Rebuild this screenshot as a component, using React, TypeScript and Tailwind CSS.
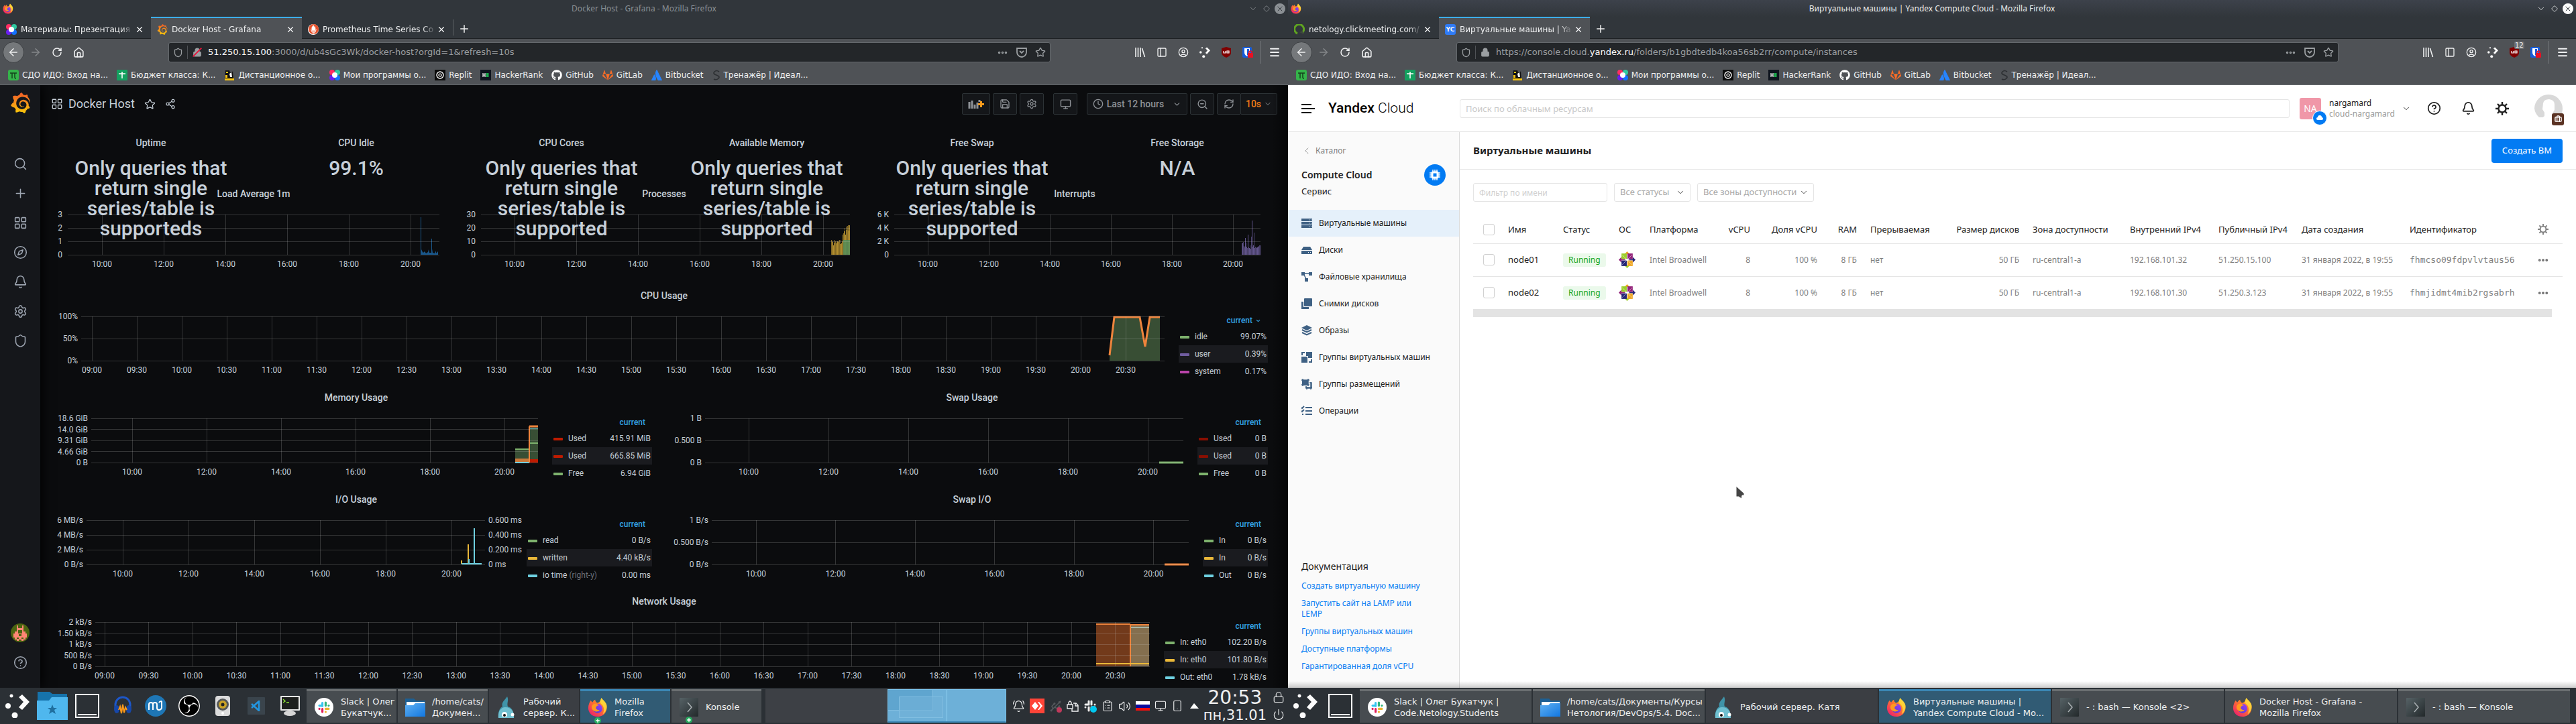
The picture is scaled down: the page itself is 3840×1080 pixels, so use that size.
import React from "react";
import {
  ArrowLeft, ArrowRight, Bell, BellRing, Briefcase, ChevronDown, ChevronLeft, CircleHelp,
  Clock, Compass, Diamond, Ellipsis, House, LayoutGrid, Lock, Menu, Monitor, PanelLeft, Plus, Power, RefreshCw,
  RotateCw, Save, Search, Settings, Share2, Shield, Smartphone, Star, Usb, UserCircle, Volume2, X, ZoomOut, ClipboardList,
} from "lucide-react";
import { FaAtlassian, FaGithub, FaGitlab } from "react-icons/fa";
import { SiGrafana, SiObsstudio, SiPrometheus } from "react-icons/si";

const UI = "font-['DejaVu_Sans',sans-serif]";

/* ---------- logos ---------- */

function FirefoxLogo({ size }: { size: number }) {
  return (
    <svg width={size} height={size} viewBox="0 0 32 32" aria-hidden="true">
      <path d="M22 1c1 3 6 5 8 11 2 8-2 19-14 19C6 31 1 24 1 17 1 12 3 8 5 5c1 2 2 3 3 3 1-2 2-3 4-4 0 2 1 4 3 5 3 0 6-3 7-8z" fill="url(#fx-body)" />
      <circle cx="16" cy="18" r="7.5" fill="url(#fx-globe)" />
      <path d="M8 12c4-3 8-1 10 1-3 0-5 2-5 4s3 4 6 3c-2 4-9 4-12-1-1-3-1-5 1-7z" fill="#ff9a1f" />
      <path d="M22 1c1 3 6 5 8 11 1 6-1 12-6 15 4-8 1-14-3-17-2-2-1-6 1-9z" fill="#ffd93b" opacity=".85" />
    </svg>
  );
}

function SlackLogo({ size }: { size: number }) {
  return (
    <svg width={size} height={size} viewBox="0 0 30 30" aria-hidden="true">
      <circle cx="15" cy="15" r="15" fill="#fff" />
      <g strokeWidth="3.4" strokeLinecap="round">
        <path d="M12.4 8v5" stroke="#36c5f0" />
        <path d="M7.6 12.4h4" stroke="#36c5f0" />
        <path d="M17.6 7.6v4.8" stroke="#2eb67d" />
        <path d="M22.4 12.4h0" stroke="#2eb67d" />
        <path d="M17.6 17.6h4.8" stroke="#ecb22e" />
        <path d="M17.6 22.4h0" stroke="#ecb22e" />
        <path d="M12.4 17.8v4.6" stroke="#e01e5a" />
        <path d="M7.6 17.6h0" stroke="#e01e5a" />
      </g>
    </svg>
  );
}

function NetologyLogo({ size }: { size: number }) {
  return (
    <svg width={size} height={size} viewBox="0 0 16 16" aria-hidden="true">
      <circle cx="4" cy="4" r="4" fill="#ff2e63" />
      <circle cx="12" cy="4" r="4" fill="#2fc9a0" />
      <circle cx="4" cy="12" r="4" fill="#6a1ff0" />
      <circle cx="12" cy="12" r="4" fill="#1471ff" />
      <circle cx="8" cy="8" r="4" fill="#fff" />
    </svg>
  );
}

function FolderLogo({ size }: { size: number }) {
  return (
    <svg width={size} height={size} viewBox="0 0 30 30" aria-hidden="true">
      <path d="M0 2h13l3 3h14v10H0z" fill="#1d5f93" />
      <path d="M2 7h27v8H2z" fill="#fff" />
      <path d="M0 12h12l3-3h15v20H0z" fill="url(#folder)" />
    </svg>
  );
}

function KonsoleLogo() {
  return (
    <svg width="28" height="28" viewBox="0 0 28 28" aria-hidden="true">
      <rect width="28" height="28" rx="1" fill="url(#konsole)" />
      <path d="M12 7l6 7-6 7" fill="none" stroke="#aab0b3" strokeWidth="1.5" />
    </svg>
  );
}

function WhaleLogo() {
  return (
    <svg width="26" height="32" viewBox="0 0 26 32" aria-hidden="true">
      <path d="M14 0c3 6-1 10 1 15 5 1 9 6 9 17H1c-1-9 2-15 6-17C5 9 10 6 14 0z" fill="#3f93a8" />
      <path d="M1 32c-1-9 3-15 9-16 8-1 15 5 14 16z" fill="#6fbfd0" />
      <circle cx="10" cy="27" r="4" fill="#fff" />
      <circle cx="10" cy="28" r="2" fill="#111" />
      <circle cx="22" cy="27" r="2.5" fill="#fff" />
    </svg>
  );
}

function PlasmaLogo({ size }: { size: number }) {
  return (
    <svg width={size} height={size} viewBox="0 0 36 36" fill="#fcfcfc" aria-hidden="true">
      <circle cx="9" cy="3" r="2.5" />
      <circle cx="4" cy="18" r="4" />
      <circle cx="14" cy="32" r="4.5" />
      <path d="M20 5l5-4 11 11-11 12-5-4 7-8z" />
    </svg>
  );
}

function Gradients() {
  return (
    <svg width="0" height="0" className="absolute" aria-hidden="true">
      <defs>
        <linearGradient id="fx-body" x1="1" y1="0" x2="0.2" y2="1">
          <stop offset="0" stopColor="#ffe030" /><stop offset=".45" stopColor="#ff7a2a" /><stop offset="1" stopColor="#ec1e6e" />
        </linearGradient>
        <linearGradient id="fx-globe" x1="1" y1="0" x2="0" y2="1">
          <stop offset="0" stopColor="#a33df5" /><stop offset="1" stopColor="#4a3fd0" />
        </linearGradient>
        <linearGradient id="folder" x1="0" y1="0" x2="1" y2="1">
          <stop offset="0" stopColor="#5fb0f2" /><stop offset="1" stopColor="#1277e0" />
        </linearGradient>
        <linearGradient id="konsole" x1="0" y1="0" x2="1" y2="1">
          <stop offset="0" stopColor="#566266" /><stop offset="1" stopColor="#23292b" />
        </linearGradient>
        <linearGradient id="grafana" x1="0" y1="0" x2="0" y2="1">
          <stop offset="0" stopColor="#f05a28" /><stop offset="1" stopColor="#fbca0a" />
        </linearGradient>
      </defs>
    </svg>
  );
}

/* ---------- browser chrome ---------- */

type TabInfo = { title: string; icon: React.ReactNode; active?: boolean };

const bookmarks: { label: string; icon: React.ReactNode }[] = [
  {
    label: "СДО ИДО: Вход на...",
    icon: <svg width="16" height="16" viewBox="0 0 16 16"><rect width="16" height="16" rx="3" fill="#35b44a" /><path d="M3 5h10M6 5v8M10 5v6q0 2 2 2" stroke="#14401c" strokeWidth="1.5" fill="none" /></svg>,
  },
  {
    label: "Бюджет класса: К...",
    icon: <svg width="16" height="16" viewBox="0 0 16 16"><rect width="16" height="16" rx="1" fill="#13a05f" /><path d="M3 6h10M8 3v10" stroke="#fff" strokeWidth="1.6" /></svg>,
  },
  {
    label: "Дистанционное о...",
    icon: <svg width="16" height="16" viewBox="0 0 16 16"><path d="M2 1h6l1 3h3l1-2 1 14H1z" fill="#111" /><path d="M3 3h3v2H3zM2 8h3v4H2zM1 13h14v3H1z" fill="#f5c211" /><path d="M8 6l3-2 1 7H9z" fill="#fff" /></svg>,
  },
  { label: "Мои программы о...", icon: <NetologyLogo size={16} /> },
  {
    label: "Replit",
    icon: <svg width="16" height="16" viewBox="0 0 16 16"><rect width="16" height="16" fill="#0b0b0b" /><circle cx="8" cy="8" r="5" fill="none" stroke="#fff" strokeWidth="1.4" /><circle cx="8" cy="8" r="2" fill="none" stroke="#fff" strokeWidth="1.2" /></svg>,
  },
  {
    label: "HackerRank",
    icon: <svg width="16" height="16" viewBox="0 0 16 16"><rect width="16" height="16" fill="#0e141e" /><path d="M4 5v6M7 5v6M4 8h3" stroke="#fff" strokeWidth="1.2" /><rect x="8.500" y="5" width="4" height="6" fill="#1ba94c" /></svg>,
  },
  { label: "GitHub", icon: <FaGithub size={16} className="text-white" /> },
  { label: "GitLab", icon: <FaGitlab size={16} className="text-[#fc6d26]" /> },
  { label: "Bitbucket", icon: <FaAtlassian size={16} className="text-[#2684ff]" /> },
  {
    label: "Тренажёр | Идеал...",
    icon: <svg width="12" height="16" viewBox="0 0 12 16"><path d="M10 3Q6 0 3 3t3 5 3 5-7 1" fill="none" stroke="#2c2f32" strokeWidth="1.6" /></svg>,
  },
];

function IconButton({ label, children, className = "" }: { label: string; children: React.ReactNode; className?: string }) {
  return (
    <button type="button" aria-label={label} className={`flex shrink-0 items-center justify-center ${className}`}>
      {children}
    </button>
  );
}

function BrowserChrome({
  title, focused, tabs, secure, url, badge,
}: {
  title: string; focused?: boolean; tabs: TabInfo[]; secure?: boolean; url: [string, string, string]; badge?: string;
}) {
  const dim = focused ? "text-[#e8eaeb]" : "text-[#8b9094]";
  return (
    <header className={`${UI} shrink-0 bg-[#31363b] text-[#eff0f1]`}>
      <div className={`grid h-[25px] grid-cols-[1fr_auto_1fr] items-center ${focused ? "bg-linear-to-b from-[#3d424b] to-[#31363b]" : ""}`}>
        <div className="pl-1"><FirefoxLogo size={16} /></div>
        <div className={`font-['Noto_Sans',sans-serif] text-xs leading-4 ${dim}`}>{title}</div>
        <div className={`flex items-center justify-end gap-1 pr-1 ${dim}`}>
          <IconButton label="Свернуть" className="size-4"><ChevronDown size={14} strokeWidth={1.5} /></IconButton>
          <IconButton label="Развернуть" className="size-4"><Diamond size={10} strokeWidth={2} /></IconButton>
          <IconButton label="Закрыть" className={`size-4 rounded-full ${focused ? "bg-[#fcfcfc] text-[#31363b]" : "bg-[#8b9094] text-[#31363b]"}`}>
            <X size={12} strokeWidth={2} />
          </IconButton>
        </div>
      </div>

      <div className="flex h-[33px] items-stretch border-b border-[#1f2225] text-xs">
        {tabs.map((t) => (
          <div
            key={t.title}
            className={`flex w-[225px] items-center pt-[3px] pr-[9px] pl-[9px] ${t.active ? "-mb-px border-t-2 border-t-[#3daee9] bg-[#4f5256]" : "border-t-2 border-t-transparent"}`}
          >
            <span className="flex size-4 shrink-0 items-center justify-center">{t.icon}</span>
            <span className="ml-[6px] min-w-0 flex-1 overflow-hidden [mask-image:linear-gradient(to_right,black_88%,transparent)] whitespace-nowrap">{t.title}</span>
            <IconButton label="Закрыть вкладку" className="size-4"><X size={14} strokeWidth={2} /></IconButton>
          </div>
        ))}
        {tabs.length > 2 && <span className="my-1 w-px bg-[#5d6165]" />}
        <IconButton label="Новая вкладка" className="w-8 pt-1"><Plus size={18} strokeWidth={2} /></IconButton>
      </div>

      <div className="bg-[#4f5256]">
        <div className="flex h-10 items-center">
          <IconButton label="Назад" className="ml-1 size-8 rounded-full border border-[#3e4144] bg-[#75787b]"><ArrowLeft size={18} /></IconButton>
          <IconButton label="Вперёд" className="ml-2 size-[18px] text-[#85888b]"><ArrowRight size={18} /></IconButton>
          <IconButton label="Обновить" className="ml-[14px] size-[18px]"><RotateCw size={16} strokeWidth={2.25} /></IconButton>
          <IconButton label="Домой" className="ml-[14px] size-[18px]"><House size={17} strokeWidth={2.25} /></IconButton>
          <div className="ml-[125px] flex h-[30px] flex-1 items-center rounded-[3px] border border-[#65696d] bg-[#232629] text-[13px] text-[#9b9fa2]">
            <Shield size={15} className="ml-[6px]" />
            <span className="mx-[6px] h-5 w-px bg-[#4f5256]" />
            <span className="relative flex size-4 items-center justify-center">
              <Lock size={14} fill="currentColor" />
              {!secure && <span className="absolute h-[18px] w-[2px] rotate-45 bg-[#e6163c]" />}
            </span>
            <span className="ml-2 min-w-0 flex-1 truncate">{url[0]}<span className="text-[#fcfcfc]">{url[1]}</span>{url[2]}</span>
            <div className="mr-[6px] flex items-center gap-3">
              <IconButton label="Действия"><Ellipsis size={17} strokeWidth={3} /></IconButton>
              <IconButton label="Pocket">
                <svg width="16" height="16" viewBox="0 0 16 16" fill="none" stroke="currentColor" strokeWidth="1.8"><path d="M1 2h14v6a7 7 0 0 1-14 0zM5 6l3 3 3-3" /></svg>
              </IconButton>
              <IconButton label="Добавить в закладки"><Star size={16} /></IconButton>
            </div>
          </div>
          <div className="ml-[126px] flex items-center gap-4">
            <IconButton label="Библиотека">
              <svg width="16" height="16" viewBox="0 0 16 16" stroke="currentColor" strokeWidth="1.6"><path d="M1 1v14M4.500 1v14M8 1v14M10.500 2l4 13" /></svg>
            </IconButton>
            <IconButton label="Боковая панель"><PanelLeft size={16} /></IconButton>
            <IconButton label="Аккаунт"><UserCircle size={16} /></IconButton>
            <IconButton label="Plasma"><PlasmaLogo size={16} /></IconButton>
            <IconButton label="uBlock" className="relative">
              <svg width="16" height="16" viewBox="0 0 16 16"><path d="M8 0l7 2v7q0 4-7 7-7-3-7-7V2z" fill="#800000" /><path d="M4 6v3h3V6M9 6h3v3H9z" fill="none" stroke="#fff" strokeWidth="1.2" /></svg>
              {badge && <span className="absolute -top-2 left-2 rounded-xs bg-[#6c6f72] px-px text-[10px] leading-[11px]">{badge}</span>}
            </IconButton>
            <IconButton label="Bitwarden">
              <svg width="16" height="16" viewBox="0 0 16 16"><rect width="14" height="16" rx="2" fill="#175ddc" /><path d="M3 2h8v6q0 4-4 6-4-2-4-6z" fill="#fff" /><path d="M7 3h3v5q0 3-3 5z" fill="#175ddc" /><rect x="8" y="9" width="8" height="7" rx="1" fill="#e81123" /><path d="M10 9V7q2-2 4 0v2" fill="none" stroke="#e81123" strokeWidth="1.500" /></svg>
            </IconButton>
          </div>
          <span className="ml-[11px] h-[34px] w-px bg-[#74777a]" />
          <IconButton label="Меню" className="mr-[11px] ml-[11px]"><Menu size={18} strokeWidth={2.5} /></IconButton>
        </div>
        <nav className="flex h-[29px] items-center gap-[13px] border-b border-[#65696d] pl-3 text-xs" aria-label="Закладки">
          {bookmarks.map((b) => (
            <a key={b.label} href="#" className="flex items-center gap-[5px] whitespace-nowrap">
              {b.icon}
              {b.label}
            </a>
          ))}
        </nav>
      </div>
    </header>
  );
}

/* ---------- Grafana ---------- */

type LegendRow = { color: string; name: string; value: string; note?: string };

const ticksBy2h = ["10:00", "12:00", "14:00", "16:00", "18:00", "20:00"];
const ticksByHalfHour = Array.from({ length: 24 }, (_, i) => `${String(9 + Math.floor(i / 2)).padStart(2, "0")}:${i % 2 ? "30" : "00"}`);

type GraphProps = {
  title: string;
  y: string[];
  yClass: string;
  width: number;
  height?: number;
  ticks: string[];
  first: number;
  step: number;
  right?: string[];
  legend?: LegendRow[];
  legendClass?: string;
  sortable?: boolean;
  span?: string;
  children?: React.ReactNode;
};

function YAxis({ labels, className }: { labels: string[]; className: string }) {
  return (
    <div className={`-my-2 flex shrink-0 flex-col justify-between text-xs leading-4 whitespace-nowrap ${className}`}>
      {labels.map((l) => <span key={l}>{l}</span>)}
    </div>
  );
}

function Graph(p: GraphProps) {
  const h = p.height ?? 66;
  const short = h === 60;
  return (
    <section className={`flex h-36 flex-col ${p.span ?? ""}`}>
      <h2 className="h-7 text-center text-sm leading-7 font-medium">{p.title}</h2>
      <div className="flex">
        <div className={`mt-[17px] flex min-w-0 flex-1 ${short ? "h-[60px]" : "h-[66px]"} ${p.legend ? "" : "mr-[25px]"}`}>
          <YAxis labels={p.y} className={`text-right ${short ? "pr-2" : "pr-[5px]"} ${p.yClass}`} />
          <div className="min-w-0 flex-1">
            <svg className="block h-full w-full overflow-visible" viewBox={`0 0 ${p.width} ${h}`} preserveAspectRatio="none" aria-hidden="true">
              {p.children}
              <g stroke="#c8c8c8" strokeOpacity=".22" shapeRendering="crispEdges">
                {p.y.map((l, i) => {
                  const yy = (h * i) / (p.y.length - 1);
                  return <line key={l} x1="0" x2={p.width} y1={yy} y2={yy} />;
                })}
                {p.ticks.map((t, i) => <line key={t} x1={p.first + i * p.step} x2={p.first + i * p.step} y1="0" y2={h} />)}
              </g>
            </svg>
            <div className="relative mt-[6px] h-4 text-xs leading-4">
              {p.ticks.map((t, i) => (
                <span key={t} className="absolute -translate-x-1/2" style={{ left: `${((p.first + i * p.step) / p.width) * 100}%` }}>{t}</span>
              ))}
            </div>
          </div>
          {p.right && <YAxis labels={p.right} className="w-[62px] pl-[5px]" />}
        </div>
        {p.legend && (
          <table className={`mt-3 mr-[14px] table-fixed self-start text-xs ${p.right ? "" : "ml-[21px]"} ${p.legendClass}`}>
            <thead>
              <tr className="h-[22px]">
                <th colSpan={2} className="p-0 pr-[10px] text-right font-medium text-[#33a2e5]">
                  <span className="inline-flex items-center gap-1">current{p.sortable && <ChevronDown size={9} strokeWidth={3} />}</span>
                </th>
              </tr>
            </thead>
            <tbody>
              {p.legend.map((r, i) => (
                <tr key={i} className="h-[26px] even:bg-[#1a1b1f]">
                  <td className="w-[62%] p-0 pl-[2px] whitespace-nowrap">
                    <span className="mr-2 inline-block h-1 w-[14px] rounded-[1px] align-middle" style={{ backgroundColor: r.color }} />
                    {r.name}{r.note && <span className="text-[#6c7077]"> {r.note}</span>}
                  </td>
                  <td className="p-0 pr-[2px] text-right whitespace-nowrap">{r.value}</td>
                </tr>
              ))}
            </tbody>
          </table>
        )}
      </div>
    </section>
  );
}

function Stat({ title, lines }: { title: string; lines: string[] }) {
  return (
    <section className="relative z-10 h-[68px] text-center">
      <h2 className="h-7 text-sm leading-7 font-medium">{title}</h2>
      <p className="pt-[9px] text-[30px] leading-[30px] font-medium">
        {lines.map((l) => <span key={l} className="block">{l}</span>)}
      </p>
    </section>
  );
}

const unsupported = ["Only queries that", "return single", "series/table is", "supported"];

function Bars({ x, h, tops, color }: { x: number; h: number; tops: number[]; color: string }) {
  return (
    <g fill={color}>
      {tops.map((t, i) => <rect key={i} x={x + i} y={t} width="1" height={h - t} opacity={i % 2 ? 0.75 : 0.55} />)}
    </g>
  );
}

const red = "#bf1b00", darkRed = "#890f02", green = "#7eb26d", yellow = "#eab839", cyan = "#6ed0e0", orange = "#ef843c", purple = "#705da0", magenta = "#ba43a9";

function ToolButton({ label, children, className = "" }: { label: string; children: React.ReactNode; className?: string }) {
  return (
    <button type="button" aria-label={label} className={`flex h-8 items-center justify-center rounded-xs border border-[#2c3235] bg-[#141619] text-[#8e9297] ${className}`}>
      {children}
    </button>
  );
}

function Grafana() {
  return (
    <div className="relative flex min-h-0 flex-1 overflow-hidden bg-[#0b0c0e] font-['Roboto',sans-serif] text-[#c7d0d9]">
      <aside className="flex w-[60px] shrink-0 flex-col items-center bg-[#15171b] pb-4 text-[#9fa7b3] shadow-[2px_0_16px_#000]">
        <a href="#" aria-label="Grafana" className="flex h-[95px] items-start pt-[11px]">
          <SiGrafana size={31} fill="url(#grafana)" />
        </a>
        {[Search, Plus, LayoutGrid, Compass, Bell, Settings, Shield].map((Icon, i) => (
          <button key={i} type="button" aria-label={["Search", "Create", "Dashboards", "Explore", "Alerting", "Configuration", "Server Admin"][i]} className="flex h-11 w-full items-center justify-center">
            <Icon size={21} strokeWidth={1.75} />
          </button>
        ))}
        <button type="button" aria-label="Profile" className="mt-auto flex h-11 w-full items-center justify-center">
          <svg width="28" height="28" viewBox="0 0 28 28">
            <circle cx="14" cy="14" r="14" fill="#4b6410" />
            <path d="M9 3h2v4h6V3h2v9h3v3h2v6h-2v3h-3v2h-3v-2h-4v2H9v-2H6v-3H4v-6h2v-3h3zM11 10v5h6v-5z" fill="#ff8674" fillRule="evenodd" />
            <path d="M12 16h4v3h-4zM9 21h3v2H9zM16 21h3v2h-3z" fill="#4b6410" />
          </svg>
        </button>
        <button type="button" aria-label="Help" className="flex h-11 w-full items-center justify-center"><CircleHelp size={21} strokeWidth={1.75} /></button>
      </aside>

      <main className="min-w-0 flex-1 px-4">
        <div className="flex h-14 items-center">
          <LayoutGrid size={18} strokeWidth={1.75} />
          <h1 className="ml-2 text-lg">Docker Host</h1>
          <button type="button" aria-label="Mark as favorite" className="ml-[14px]"><Star size={17} strokeWidth={1.75} /></button>
          <button type="button" aria-label="Share dashboard" className="ml-[14px]"><Share2 size={16} strokeWidth={1.75} /></button>
          <div className="ml-auto flex items-center gap-1">
            <ToolButton label="Add panel" className="w-[42px]">
              <svg width="24" height="16" viewBox="0 0 24 16"><path d="M2 5v10M6 3v12M10 9v6M14 6v9M17 2v3" stroke="#8e9297" strokeWidth="3" /><path d="M19.500 4v9M15 8.500h9" stroke="#f99b1c" strokeWidth="3" /></svg>
            </ToolButton>
            <ToolButton label="Save dashboard" className="w-9"><Save size={16} /></ToolButton>
            <ToolButton label="Dashboard settings" className="w-9"><Settings size={16} /></ToolButton>
            <ToolButton label="Cycle view mode" className="mx-[10px] w-9"><Monitor size={17} /></ToolButton>
            <ToolButton label="Time range" className="w-[150px] gap-[5px] text-sm font-medium">
              <Clock size={16} />Last 12 hours<ChevronDown size={13} className="ml-2" />
            </ToolButton>
            <ToolButton label="Zoom out" className="w-9"><ZoomOut size={17} /></ToolButton>
            <div className="flex">
              <ToolButton label="Refresh" className="w-9"><RefreshCw size={16} /></ToolButton>
              <ToolButton label="Refresh interval" className="-ml-px w-[55px] gap-1 text-sm font-medium">
                <span className="text-[#eb7b18]">10s</span><ChevronDown size={12} />
              </ToolButton>
            </div>
          </div>
        </div>

        <div className="grid grid-cols-6 gap-2 pt-4">
          <Stat title="Uptime" lines={["Only queries that", "return single", "series/table is", "supporteds"]} />
          <Stat title="CPU Idle" lines={["99.1%"]} />
          <Stat title="CPU Cores" lines={unsupported} />
          <Stat title="Available Memory" lines={unsupported} />
          <Stat title="Free Swap" lines={unsupported} />
          <Stat title="Free Storage" lines={["N/A"]} />

          <Graph span="col-span-2" title="Load Average 1m" y={["3", "2", "1", "0"]} yClass="w-[25px]" width={554} height={60} ticks={ticksBy2h} first={51} step={92}>
            <path d="M526 60V4h1v48l2 4 1 1 2-2 2 3 3-2 1-4 1 5h3V36h1v15l1 6 3 1 2-4v4l3-3v5z" fill="#1f78c1" opacity=".7" />
          </Graph>
          <Graph span="col-span-2" title="Processes" y={["30", "20", "10", "0"]} yClass="w-[29px]" width={550} height={60} ticks={ticksBy2h} first={50} step={92}>
            <Bars x={522} h={60} tops={[38, 41, 39, 46, 38, 42, 40, 43, 40, 40, 39, 41, 38, 44, 38, 43, 40, 30, 28, 25, 20, 30, 18, 23, 17, 16, 24, 16]} color={yellow} />
            <rect x="540" y="38" width="10" height="22" fill="#4f8e5c" opacity=".8" />
          </Graph>
          <Graph span="col-span-2" title="Interrupts" y={["6 K", "4 K", "2 K", "0"]} yClass="w-[33px]" width={546} height={60} ticks={ticksBy2h} first={50} step={91}>
            <Bars x={518} h={60} tops={[43, 42, 41, 47, 49, 35, 42, 48, 50, 30, 49, 50, 46, 51, 33, 9, 48, 46, 27, 50, 48, 49, 50, 49, 47, 48, 46, 46]} color="#806eb7" />
          </Graph>

          <Graph
            span="col-span-6" title="CPU Usage" y={["100%", "50%", "0%"]} yClass="w-[45px]" width={1615} ticks={ticksByHalfHour} first={16} step={67}
            sortable legendClass="w-[133px]"
            legend={[{ color: green, name: "idle", value: "99.07%" }, { color: purple, name: "user", value: "0.39%" }, { color: magenta, name: "system", value: "0.17%" }]}
          >
            <path d="M1533 58l7-58h38l8 45 7-45h15v66h-75z" fill={green} opacity=".4" />
            <path d="M1533 58l7-57h38l8 44 7-44h15" fill="none" stroke={orange} strokeWidth="3" />
          </Graph>

          <Graph
            span="col-span-3" title="Memory Usage" y={["18.6 GiB", "14.0 GiB", "9.31 GiB", "4.66 GiB", "0 B"]} yClass="w-[60px]" width={666} ticks={ticksBy2h} first={61} step={111}
            legendClass="w-[149px]"
            legend={[{ color: red, name: "Used", value: "415.91 MiB" }, { color: red, name: "Used", value: "665.85 MiB" }, { color: green, name: "Free", value: "6.94 GiB" }]}
          >
            <rect x="632" y="45" width="21" height="21" fill={green} opacity=".4" />
            <rect x="653" y="14" width="13" height="52" fill={green} opacity=".4" />
            <path d="M632 46h21M654 37h12" stroke={green} strokeWidth="2" />
            <rect x="632" y="60" width="21" height="5" fill={orange} opacity=".8" />
            <path d="M632 66h21" stroke={cyan} strokeWidth="2" />
            <rect x="654" y="61" width="12" height="5" fill={red} />
            <path d="M653 66V12" stroke={orange} strokeWidth="2" />
            <path d="M653 12h13" stroke={orange} strokeWidth="3" />
            <path d="M654 15h12" stroke={cyan} strokeWidth="1" />
          </Graph>
          <Graph
            span="col-span-3" title="Swap Usage" y={["1 B", "0.500 B", "0 B"]} yClass="w-[57px]" width={713} ticks={ticksBy2h} first={65} step={119}
            legendClass="w-[105px]"
            legend={[{ color: darkRed, name: "Used", value: "0 B" }, { color: darkRed, name: "Used", value: "0 B" }, { color: green, name: "Free", value: "0 B" }]}
          >
            <path d="M677 66h36" stroke={green} strokeWidth="3" />
          </Graph>

          <Graph
            span="col-span-3" title="I/O Usage" y={["6 MB/s", "4 MB/s", "2 MB/s", "0 B/s"]} yClass="w-[53px]" width={594} ticks={ticksBy2h} first={54} step={98}
            right={["0.600 ms", "0.400 ms", "0.200 ms", "0 ms"]} legendClass="w-[187px]"
            legend={[{ color: green, name: "read", value: "0 B/s" }, { color: yellow, name: "written", value: "4.40 kB/s" }, { color: cyan, name: "io time", note: "(right-y)", value: "0.00 ms" }]}
          >
            <path d="M559 60v5M569 36v29" stroke={yellow} strokeWidth="2" />
            <path d="M559 65h30M578 65V12M570 58v7" stroke={cyan} strokeWidth="2" />
          </Graph>
          <Graph
            span="col-span-3" title="Swap I/O" y={["1 B/s", "0.500 B/s", "0 B/s"]} yClass="w-[67px]" width={711} ticks={ticksBy2h} first={66} step={118.5}
            legendClass="w-[97px]"
            legend={[{ color: green, name: "In", value: "0 B/s" }, { color: yellow, name: "In", value: "0 B/s" }, { color: cyan, name: "Out", value: "0 B/s" }]}
          >
            <path d="M675 66h36" stroke={orange} strokeWidth="3" />
          </Graph>

          <Graph
            span="col-span-6" title="Network Usage" y={["2 kB/s", "1.50 kB/s", "1 kB/s", "500 B/s", "0 B/s"]} yClass="w-[66px]" width={1572} ticks={ticksByHalfHour} first={14} step={65.5}
            legendClass="w-[155px]"
            legend={[{ color: green, name: "In: eth0", value: "102.20 B/s" }, { color: yellow, name: "In: eth0", value: "101.80 B/s" }, { color: cyan, name: "Out: eth0", value: "1.78 kB/s" }]}
          >
            <rect x="1492" y="2" width="51" height="64" fill="#b85a24" opacity=".6" />
            <rect x="1543" y="4" width="28" height="62" fill="#a68c62" opacity=".78" />
            <path d="M1492 3h51M1543 4h28M1543 3v63" stroke={orange} strokeWidth="2" />
            <path d="M1544 8h27" stroke="#a8b5a4" strokeWidth="2" />
            <path d="M1492 62h79" stroke={yellow} strokeWidth="2" />
          </Graph>
        </div>
      </main>
      <div className="pointer-events-none absolute inset-y-0 right-0 w-6 bg-linear-to-r from-transparent to-black/50" />
    </div>
  );
}

/* ---------- Yandex Cloud ---------- */

const menu: { label: string; icon: React.ReactNode }[] = [
  { label: "Виртуальные машины", icon: <><path d="M0 1h16v4H0zM0 6h16v4H0zM0 11h16v4H0z" /><path d="M11 3h1M14 3h1M11 8h1M14 8h1M11 13h1M14 13h1" stroke="#fff" /></> },
  { label: "Диски", icon: <><path d="M3 3h10l3 5H0zM0 9h16v5H0z" /><path d="M10 11.500h1M13 11.500h1" stroke="#fff" /></> },
  { label: "Файловые хранилища", icon: <><path d="M0 1h5v5H0zM11 1h5v5h-5zM5 10h5v5H5z" /><path d="M5 3h6M4 5l3 6" stroke="#3f6184" strokeWidth="1.500" /></> },
  { label: "Снимки дисков", icon: <><rect x="4" width="12" height="12" rx="1" /><path d="M0 5h3v8h8v3H0z" /></> },
  { label: "Образы", icon: <><path d="M8 0l8 4-8 4-8-4z" /><path d="M1 7l7 3.500L15 7M1 11l7 3.500 7-3.500" fill="none" stroke="#3f6184" strokeWidth="2" /></> },
  { label: "Группы виртуальных машин", icon: <><path d="M7 0h9v9h-6V6H7zM0 7h9v9H0z" /><path d="M1 5V1h4M15 11v4h-4" fill="none" stroke="#3f6184" strokeWidth="2" /></> },
  { label: "Группы размещений", icon: <><path d="M1 2h9v8H1z" /><path d="M0 2h12M2 0v11M10 0v11M0 9h12M12 6h3v8H7v-3M6 13h10M14 5v11M8 12v4" stroke="#3f6184" fill="none" strokeWidth="1.500" /></> },
  { label: "Операции", icon: <path d="M6 3h10M6 8h10M6 13h10M0 3l1 1 3-3M0 8l1 1 3-3M1 13h2" stroke="#3f6184" fill="none" strokeWidth="2" /> },
];

const docs = ["Создать виртуальную машину", "Запустить сайт на LAMP или LEMP", "Группы виртуальных машин", "Доступные платформы", "Гарантированная доля vCPU"];

const vms = [
  { name: "node01", internal: "192.168.101.32", external: "51.250.15.100", id: "fhmcso09fdpvlvtaus56" },
  { name: "node02", internal: "192.168.101.30", external: "51.250.3.123", id: "fhmjidmt4mib2rgsabrh" },
];

function CentosLogo() {
  return (
    <svg width="25" height="25" viewBox="0 0 24 24" aria-hidden="true">
      <path d="M12 0l4 4H8z" fill="#efa724" /><path d="M24 12l-4 4V8z" fill="#262577" />
      <path d="M12 24l-4-4h8z" fill="#9ccd2a" /><path d="M0 12l4-4v8z" fill="#932279" />
      <rect x="4" y="3" width="7.500" height="8" fill="#9ccd2a" /><rect x="12.500" y="3" width="7.500" height="8" fill="#932279" />
      <rect x="4" y="13" width="7.500" height="8" fill="#262577" /><rect x="12.500" y="13" width="7.500" height="8" fill="#efa724" />
      <path d="M12 12L5 5M12 12l7-7M12 12l-7 7M12 12l7 7" stroke="#fff" strokeWidth=".5" />
      <path d="M3 12h6" stroke="#932279" strokeWidth="1.500" /><path d="M15 12h6" stroke="#262577" strokeWidth="1.500" />
    </svg>
  );
}

function GearIcon({ size }: { size: number }) {
  return (
    <svg width={size} height={size} viewBox="0 0 20 20" fill="none" stroke="currentColor" aria-hidden="true">
      <circle cx="10" cy="10" r="5.500" strokeWidth="2.400" />
      <path d="M10 0v4M10 16v4M0 10h4M16 10h4M3 3l2.800 2.800M14.200 14.200L17 17M3 17l2.800-2.800M14.200 5.800L17 3" strokeWidth="2.400" />
    </svg>
  );
}

function Select({ label, className }: { label: string; className: string }) {
  return (
    <div className={`relative h-7 ${className}`}>
      <select aria-label={label} className="h-full w-full appearance-none rounded-[3px] border border-[#e5e5e5] bg-white pl-2 text-[13px] text-[#a6a6a6]">
        <option>{label}</option>
      </select>
      <ChevronDown size={14} strokeWidth={1.5} className="pointer-events-none absolute top-[7px] right-2 text-[#333]" />
    </div>
  );
}

const tick = "block size-[17px] appearance-none rounded-[3px] border border-[#d0d0d0] bg-white";

function YandexCloud() {
  return (
    <div className="relative flex min-h-0 flex-1 flex-col overflow-hidden bg-white font-['Noto_Sans',sans-serif] text-[#222]">
      <div className="flex h-[70px] shrink-0 items-center border-b border-[#e5e5e5] pr-5">
        <div className="flex w-64 shrink-0 items-center pl-5">
          <IconButton label="Меню">
            <svg width="20" height="16" viewBox="0 0 20 16" stroke="#000" strokeWidth="2"><path d="M0 2h15M0 8h20M0 14h15" /></svg>
          </IconButton>
          <a href="#" className="ml-5 font-['Roboto',sans-serif] text-[21px] whitespace-nowrap text-black"><span className="font-medium">Yandex</span> <span className="font-light">Cloud</span></a>
        </div>
        <input aria-label="Поиск" placeholder="Поиск по облачным ресурсам" className="h-7 min-w-0 flex-1 rounded-[3px] border border-[#e5e5e5] px-2 text-[13px] placeholder:text-[#c9c9c9]" />
        <button type="button" className="ml-[15px] flex items-center text-left">
          <span className="relative flex size-8 items-center justify-center rounded-[3px] bg-[#f097a8] text-sm text-white">
            NA
            <span className="absolute -right-[9px] -bottom-[9px] flex size-[22px] items-center justify-center rounded-full border border-white bg-[#027bf3]">
              <svg width="10" height="8" viewBox="0 0 10 8"><path d="M2 7a2 2 0 0 1 0-4 3 3 0 0 1 6 0 2 2 0 0 1 0 4z" fill="#fff" /></svg>
            </span>
          </span>
          <span className="ml-3 w-[104px] text-xs leading-4">
            <span className="block">nargamard</span>
            <span className="block text-[#999]">cloud-nargamard</span>
          </span>
          <ChevronDown size={14} strokeWidth={1.5} className="ml-1" />
        </button>
        <div className="ml-6 flex items-center gap-[30px]">
          <IconButton label="Помощь"><CircleHelp size={21} strokeWidth={2} /></IconButton>
          <IconButton label="Уведомления"><Bell size={21} strokeWidth={2} /></IconButton>
          <IconButton label="Настройки"><GearIcon size={20} /></IconButton>
        </div>
        <button type="button" aria-label="Профиль" className="relative ml-[38px] size-[42px] rounded-full">
          <svg width="42" height="42" viewBox="0 0 42 42">
            <path d="M21 0a21 21 0 0 1 21 21c0 5-2 10-5 13H7a21 21 0 0 1-7-13A21 21 0 0 1 21 0z" fill="#d9d9d9" />
            <path d="M13 13q1-6 9-6 8 1 8 8v8l-3 5v5l6 5H8l7-6v-5l-3-5z" fill="#fff" />
          </svg>
          <span className="absolute -right-[2px] -bottom-1 flex size-[18px] items-center justify-center rounded-[3px] bg-[#5b3324] text-white"><Briefcase size={11} strokeWidth={3} /></span>
        </button>
      </div>

      <div className="flex min-h-0 flex-1">
        <aside className="flex w-64 shrink-0 flex-col border-r border-[#dcdcdc] bg-[#fafafa]">
          <a href="#" className="mt-5 flex items-center gap-[5px] pl-5 text-xs leading-4 text-[#808080]"><ChevronLeft size={16} strokeWidth={1.25} />Каталог</a>
          <div className="mt-3 flex h-8 items-center justify-between pr-5 pl-5">
            <h2 className="text-sm font-semibold">Compute Cloud</h2>
            <span className="flex size-8 items-center justify-center rounded-full bg-[#027bf3]">
              <svg width="16" height="16" viewBox="0 0 16 16" fill="none" stroke="#fff"><rect x="4" y="4" width="8" height="8" rx="1" strokeWidth="3" /><path d="M5 0v3M8 0v3M11 0v3M5 13v3M8 13v3M11 13v3M0 5h3M0 8h3M0 11h3M13 5h3M13 8h3M13 11h3" strokeWidth="1.500" /></svg>
            </span>
          </div>
          <p className="pl-5 text-[13px] leading-4">Сервис</p>
          <ul className="mt-5">
            {menu.map((m, i) => (
              <li key={m.label}>
                <a href="#" className={`flex h-10 items-center gap-[10px] pl-5 text-xs ${i === 0 ? "bg-[#e5f0fa]" : ""}`}>
                  <svg width="16" height="16" viewBox="0 0 16 16" fill="#3f6184" aria-hidden="true">{m.icon}</svg>
                  {m.label}
                </a>
              </li>
            ))}
          </ul>
          <div className="mt-auto pr-[50px] pb-6 pl-5">
            <h3 className="text-sm leading-5">Документация</h3>
            <ul className="mt-[11px] space-y-[10px] text-xs leading-4 text-[#027bf3]">
              {docs.map((d) => <li key={d}><a href="#">{d}</a></li>)}
            </ul>
          </div>
        </aside>

        <main className="min-w-0 flex-1">
          <div className="flex h-14 items-center justify-between border-b border-[#e5e5e5] px-5">
            <h1 className="text-[15px] font-bold">Виртуальные машины</h1>
            <button type="button" className="h-9 rounded-[4px] bg-[#027bf3] px-4 text-[13px] text-white">Создать ВМ</button>
          </div>
          <div className="px-5 pt-5">
            <div className="flex gap-[10px]">
              <input aria-label="Фильтр по имени" placeholder="Фильтр по имени" className="h-7 w-[200px] rounded-[3px] border border-[#e5e5e5] px-2 text-xs placeholder:text-[#d0d0d0]" />
              <Select label="Все статусы" className="w-[114px]" />
              <Select label="Все зоны доступности" className="w-[174px]" />
            </div>
            <table className="mt-[21px] w-full table-fixed text-left text-xs text-[#808080]">
              <colgroup>
                <col className="w-[52px]" /><col className="w-[82px]" /><col className="w-[83px]" /><col className="w-[46px]" />
                <col className="w-[101px]" /><col className="w-[49px]" /><col className="w-[100px]" /><col className="w-[59px]" />
                <col className="w-[137px]" /><col className="w-[105px]" /><col className="w-[165px]" /><col className="w-[132px]" />
                <col className="w-[124px]" /><col className="w-[161px]" /><col className="w-[169px]" /><col />
              </colgroup>
              <thead className="text-[13px] whitespace-nowrap text-[#222] [&_th]:p-0 [&_th]:font-normal">
                <tr className="h-[41px] border-b border-[#e5e5e5]">
                  <th><input type="checkbox" aria-label="Выбрать все" className={`ml-[15px] ${tick}`} /></th>
                  <th>Имя</th><th>Статус</th><th>ОС</th><th>Платформа</th>
                  <th className="text-right">vCPU</th><th className="text-right">Доля vCPU</th><th className="text-right">RAM</th>
                  <th><span className="ml-5">Прерываемая</span></th><th className="text-right">Размер дисков</th>
                  <th><span className="ml-5">Зона доступности</span></th><th>Внутренний IPv4</th><th>Публичный IPv4</th>
                  <th>Дата создания</th><th>Идентификатор</th>
                  <th><IconButton label="Настроить таблицу" className="mx-auto text-[#808080]"><GearIcon size={16} /></IconButton></th>
                </tr>
              </thead>
              <tbody className="[&_td]:p-0">
                {vms.map((v) => (
                  <tr key={v.name} className="h-[49px] border-b border-[#e5e5e5] whitespace-nowrap last:border-0">
                    <td><input type="checkbox" aria-label={v.name} className={`ml-[15px] ${tick}`} /></td>
                    <td className="text-[13px] text-[#222]">{v.name}</td>
                    <td><span className="inline-block rounded-[3px] bg-[#ebf9eb] px-2 leading-5 text-[#17a617]">Running</span></td>
                    <td><CentosLogo /></td>
                    <td>Intel Broadwell</td>
                    <td className="text-right">8</td>
                    <td className="text-right">100 %</td>
                    <td className="text-right">8 ГБ</td>
                    <td><span className="ml-5">нет</span></td>
                    <td className="text-right">50 ГБ</td>
                    <td><span className="ml-5">ru-central1-a</span></td>
                    <td>{v.internal}</td>
                    <td>{v.external}</td>
                    <td>31 января 2022, в 19:55</td>
                    <td className="font-['DejaVu_Sans_Mono',monospace] text-[13px]">{v.id}</td>
                    <td><IconButton label="Действия" className="mx-auto text-[#666]"><Ellipsis size={18} strokeWidth={3} /></IconButton></td>
                  </tr>
                ))}
              </tbody>
            </table>
            <div className="mr-4 h-3 bg-[#e3e3e3]" />
          </div>
        </main>
      </div>

      <svg className="absolute top-[597px] left-[667px]" width="14" height="21" viewBox="0 0 14 21" aria-hidden="true">
        <path d="M1 1v16h4l4 3 1-5h3v-3z" fill="#454545" stroke="#fff" />
      </svg>
      <div className="pointer-events-none absolute inset-x-0 bottom-0 h-[10px] bg-linear-to-b from-transparent to-black/20" />
    </div>
  );
}

/* ---------- taskbars ---------- */

type TaskInfo = { icon: React.ReactNode; lines: string[]; state?: "active" | "minimized"; plus?: boolean };

function Task({ icon, lines, state, plus }: TaskInfo) {
  const look =
    state === "active" ? "border-[#3b87b5] bg-[#315b74]" : state === "minimized" ? "border-[#3b3e43] bg-[#3b3e43]" : "border-[#6b6f71] bg-[#474c50]";
  return (
    <button type="button" className={`flex h-[50px] min-w-0 flex-1 items-center border-t-3 text-left text-[13px] leading-[17px] ${look}`}>
      <span className="relative flex w-[51px] shrink-0 items-center justify-center">
        {icon}
        {plus && <span className="absolute -bottom-[10px] flex size-[10px] items-center justify-center rounded-full bg-[#27ae60] text-white"><Plus size={8} strokeWidth={4} /></span>}
      </span>
      <span className="min-w-0 whitespace-nowrap">{lines.map((l) => <span key={l} className="block">{l}</span>)}</span>
    </button>
  );
}

function DesktopButton() {
  return (
    <IconButton label="Показать рабочий стол">
      <svg width="36" height="36" viewBox="0 0 36 36" fill="none" stroke="#fcfcfc" strokeWidth="2"><rect x="1" y="1" width="34" height="34" /><path d="M4 31h28" /></svg>
    </IconButton>
  );
}

const bar = `${UI} flex h-[54px] shrink-0 items-center bg-[#2b3035] text-[#eff0f1]`;

function LeftTaskbar() {
  return (
    <footer className={bar}>
      <IconButton label="Меню приложений" className="ml-2"><PlasmaLogo size={36} /></IconButton>
      <IconButton label="Dolphin" className="ml-[11px]">
        <svg width="46" height="42" viewBox="0 0 46 42"><path d="M1 0h18l4 3h22v12H1z" fill="#1673ab" /><path d="M0 13h18l4-5h24v34H0z" fill="#4fb7ee" /><path d="M23 19l2 5h5l-4 3 2 6-5-3-5 3 2-6-4-3h5z" fill="#1f6f9f" /></svg>
      </IconButton>
      <span className="ml-[11px] flex"><DesktopButton /></span>
      <div className="ml-5 flex items-center gap-[18px]">
        <IconButton label="Audacity">
          <svg width="30" height="32" viewBox="0 0 30 32"><path d="M4 20V14a11 11 0 0 1 22 0v6" fill="none" stroke="#1d57c9" strokeWidth="3" /><ellipse cx="6" cy="21" rx="4" ry="6" fill="#1747a8" /><ellipse cx="24" cy="21" rx="4" ry="6" fill="#1747a8" /><path d="M9 22l2-5 2 10 2-13 2 12 2-8 2 4" fill="none" stroke="#ff9a1a" strokeWidth="2" /></svg>
        </IconButton>
        <IconButton label="MuseScore">
          <svg width="32" height="32" viewBox="0 0 32 32"><circle cx="16" cy="16" r="16" fill="#1e76b5" /><path d="M6 22v-8q0-3 3-3t3 3v8M12 14q0-3 3-3t3 3v5q0 3 3 3t4-3V9M21 11q1-2 4-2" fill="none" stroke="#fff" strokeWidth="2" /></svg>
        </IconButton>
        <IconButton label="OBS Studio" className="rounded-full bg-black text-white"><SiObsstudio size={32} /></IconButton>
        <IconButton label="Плеер">
          <svg width="32" height="32" viewBox="0 0 32 32"><rect x="5" y="1" width="22" height="30" rx="4" fill="#dcdcdc" /><circle cx="16" cy="14" r="9" fill="#55585a" /><circle cx="16" cy="14" r="6" fill="#c9a227" /><circle cx="16" cy="14" r="2.500" fill="#222" /><circle cx="16" cy="27" r="2" fill="#fff" /></svg>
        </IconButton>
        <IconButton label="VS Code">
          <svg width="32" height="28" viewBox="0 0 32 28"><rect x="3" y="1" width="26" height="26" rx="1" fill="#3a444c" /><path d="M20 6v16M20 7L9 17M20 21L9 11" fill="none" stroke="#2396e0" strokeWidth="2.500" /></svg>
        </IconButton>
        <IconButton label="Терминал">
          <svg width="32" height="32" viewBox="0 0 32 32"><rect x="2" y="1" width="29" height="22" rx="1" fill="#e6e6e6" /><rect x="4" y="3" width="25" height="18" fill="#1d1f1d" /><path d="M6 6l3 3-3 2M11 11h4" fill="none" stroke="#8ae234" strokeWidth="1.500" /><ellipse cx="16" cy="27" rx="9" ry="4" fill="#d6d6d6" /></svg>
        </IconButton>
      </div>
      <div className="ml-[9px] flex w-[678px] gap-[2px]">
        <Task icon={<SlackLogo size={28} />} lines={["Slack | Олег", "Букатчук..."]} />
        <Task icon={<FolderLogo size={30} />} lines={["/home/cats/", "Докумен..."]} />
        <Task icon={<WhaleLogo />} lines={["Рабочий", "сервер. К..."]} state="minimized" />
        <Task icon={<FirefoxLogo size={30} />} lines={["Mozilla", "Firefox"]} state="active" plus />
        <Task icon={<KonsoleLogo />} lines={["Konsole"]} plus />
      </div>
      <div className="ml-[6px] h-[50px] flex-1 bg-[#3d4045]" />
      <button type="button" aria-label="Рабочие столы" className="flex h-[50px] w-[177px] border border-b-2 border-[#7cc4ec] border-b-[#3b87b5] bg-[#6db0d8]">
        <span className="relative h-full flex-1 border-r border-[#8fd0f2]">
          <span className="absolute top-0 left-0 h-[31px] w-[67px] border-r border-b border-[#82bfe2] bg-[#5fa5cf]" />
          <span className="absolute top-[10px] left-4 h-8 w-[66px] border border-[#82bfe2] bg-[#73b3d9]/60" />
        </span>
        <span className="flex-1" />
      </button>
      <div className="ml-[9px] flex items-center gap-[7px]">
        <BellRing size={19} strokeWidth={1.5} />
        <span className="flex h-[22px] w-[22px] items-center justify-center bg-[#ff4438]"><svg width="16" height="12" viewBox="0 0 16 12" fill="#fff"><path d="M5 0l5 6-5 6-5-6zM9 0h2l5 6-5 6H9l4-6z" /></svg></span>
        <span className="relative text-[#54585c]"><Usb size={19} /><span className="absolute right-0 bottom-0 size-2 rounded-full bg-[#c0395b]" /></span>
        <svg width="18" height="18" viewBox="0 0 18 18" fill="none" stroke="currentColor" strokeWidth="1.400"><path d="M1 7h8v6H1zM3 7V4q2-4 4 0v3M10 5h4l3 3v9H8v-3M13 5v4h4" /></svg>
        <span className="relative flex size-[20px] items-center justify-center">
          <svg width="18" height="18" viewBox="0 0 18 18" stroke="#eee" strokeWidth="3" strokeLinecap="round"><path d="M7 2v5M2 7h5M11 2v5M16 7h0M2 11h0M7 11v5M11 11h5" /></svg>
          <span className="absolute right-0 bottom-0 size-[10px] rounded-full bg-[#00c8f0]" />
        </span>
        <ClipboardList size={18} strokeWidth={1.5} />
        <Volume2 size={19} strokeWidth={1.5} />
        <svg width="21" height="14" viewBox="0 0 21 14"><path d="M0 0h21v5H0z" fill="#fff" /><path d="M0 5h21v5H0z" fill="#0b0b9c" /><path d="M0 10h21v4H0z" fill="#f01010" /></svg>
        <Monitor size={18} strokeWidth={1.5} />
        <Smartphone size={18} strokeWidth={1.5} />
        <svg width="19" height="8" viewBox="0 0 19 8"><path d="M9 0l7 8H3z" fill="#fcfcfc" /></svg>
      </div>
      <div className="ml-1 shrink-0 text-center">
        <div className="text-[28px] leading-7">20:53</div>
        <div className="text-[21px] leading-6">пн,31.01</div>
      </div>
      <div className="mr-[5px] ml-[9px] flex flex-col items-center gap-2">
        <IconButton label="Заблокировать"><Lock size={18} strokeWidth={1.5} /></IconButton>
        <IconButton label="Завершение работы"><Power size={18} strokeWidth={1.5} /></IconButton>
      </div>
    </footer>
  );
}

function RightTaskbar() {
  return (
    <footer className={bar}>
      <IconButton label="Меню приложений" className="ml-2"><PlasmaLogo size={36} /></IconButton>
      <span className="ml-4 flex"><DesktopButton /></span>
      <div className="mr-[9px] ml-[11px] flex min-w-0 flex-1 gap-[2px]">
        <Task icon={<SlackLogo size={28} />} lines={["Slack | Олег Букатчук |", "Code.Netology.Students"]} />
        <Task icon={<FolderLogo size={30} />} lines={["/home/cats/Документы/Курсы", "Нетология/DevOps/5.4. Doc..."]} />
        <Task icon={<WhaleLogo />} lines={["Рабочий сервер. Катя"]} state="minimized" />
        <Task icon={<FirefoxLogo size={30} />} lines={["Виртуальные машины |", "Yandex Compute Cloud - Mo..."]} state="active" />
        <Task icon={<KonsoleLogo />} lines={["- : bash — Konsole <2>"]} />
        <Task icon={<FirefoxLogo size={30} />} lines={["Docker Host - Grafana -", "Mozilla Firefox"]} />
        <Task icon={<KonsoleLogo />} lines={["- : bash — Konsole"]} />
      </div>
    </footer>
  );
}

export default function App() {
  return (
    <div className="flex h-screen overflow-hidden">
      <Gradients />
      <div className="flex min-w-0 flex-1 flex-col">
        <BrowserChrome
          title="Docker Host - Grafana - Mozilla Firefox"
          url={["", "51.250.15.100", ":3000/d/ub4sGc3Wk/docker-host?orgId=1&refresh=10s"]}
          tabs={[
            { title: "Материалы: Презентация", icon: <NetologyLogo size={16} /> },
            { title: "Docker Host - Grafana", icon: <SiGrafana size={16} fill="url(#grafana)" />, active: true },
            { title: "Prometheus Time Series Co", icon: <span className="flex size-4 items-center justify-center rounded-full bg-white"><SiPrometheus size={15} className="text-[#e6522c]" /></span> },
          ]}
        />
        <Grafana />
        <LeftTaskbar />
      </div>
      <div className="flex min-w-0 flex-1 flex-col">
        <BrowserChrome
          title="Виртуальные машины | Yandex Compute Cloud - Mozilla Firefox"
          focused secure badge="12"
          url={["https://console.cloud.", "yandex.ru", "/folders/b1gbdtedb4koa56sb2rr/compute/instances"]}
          tabs={[
            { title: "netology.clickmeeting.com/", icon: <svg width="16" height="16" viewBox="0 0 16 16"><path d="M5 14A7 7 0 1 1 12 13" fill="none" stroke="#5fa321" strokeWidth="3" /><path d="M8 12l5-2 2 5z" fill="#3f4a3c" /></svg> },
            { title: "Виртуальные машины | Ya", icon: <span className="flex size-4 items-center justify-center rounded-[3px] bg-[#2f7bf6] text-[9px] leading-4 font-bold">YC</span>, active: true },
          ]}
        />
        <YandexCloud />
        <RightTaskbar />
      </div>
    </div>
  );
}
